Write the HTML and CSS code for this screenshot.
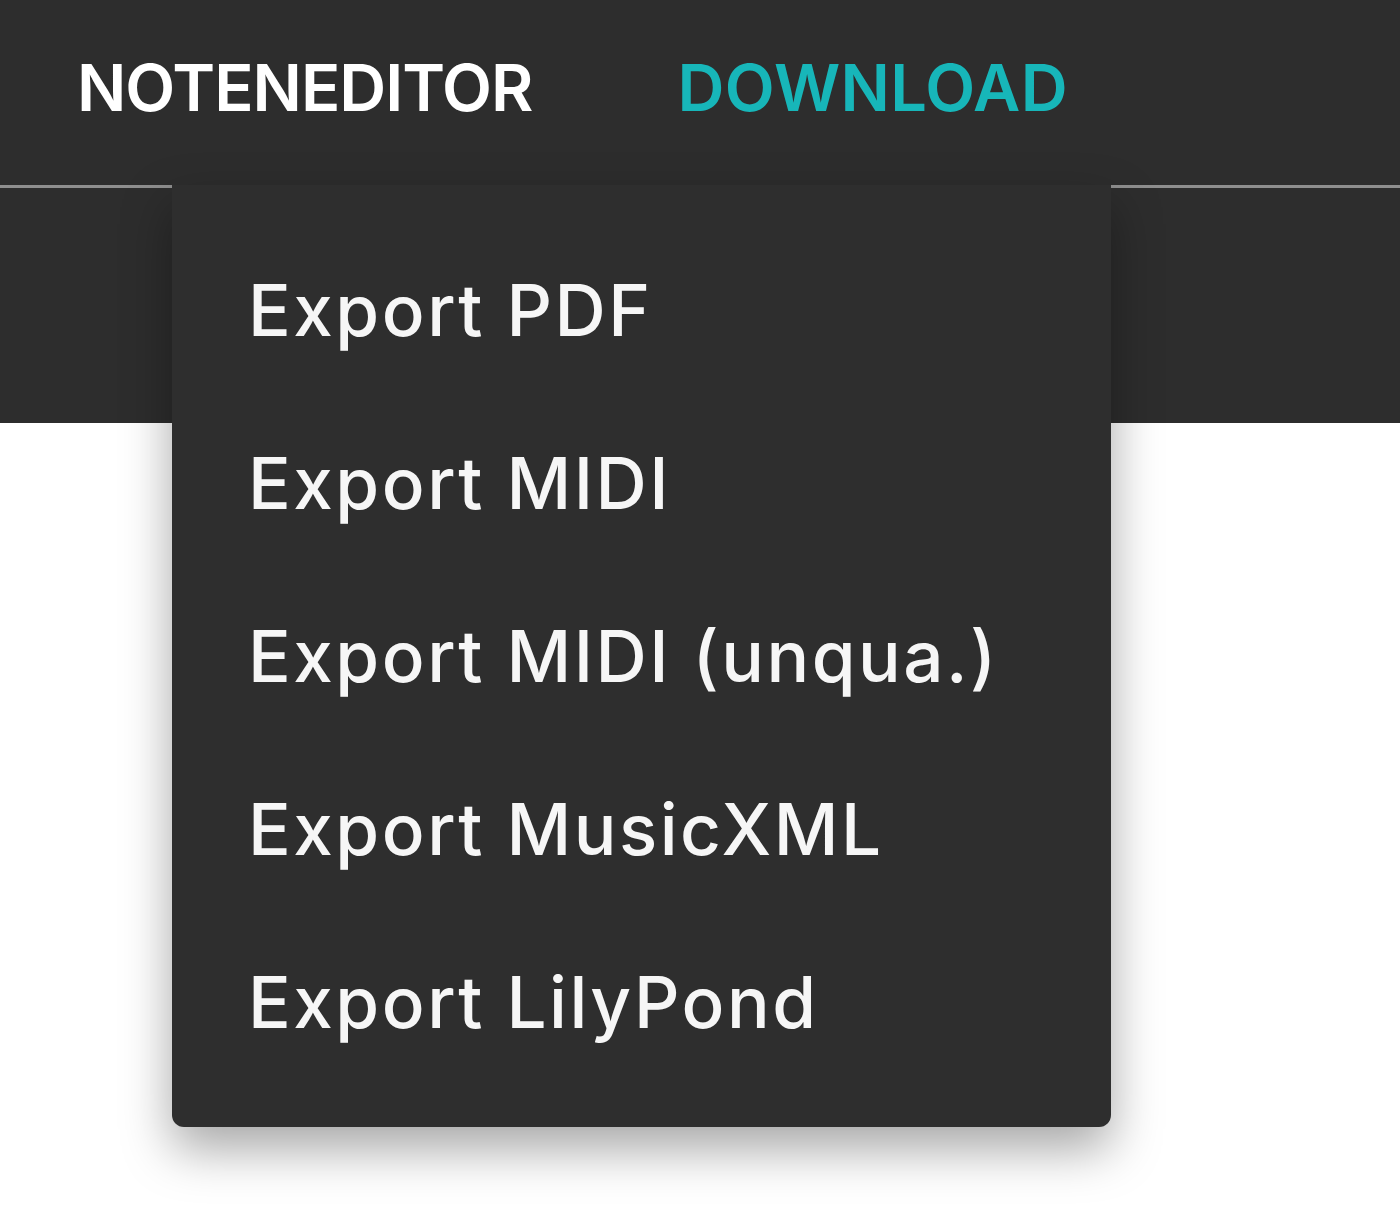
FILE: index.html
```html
<!DOCTYPE html>
<html lang="de">
<head>
  <meta charset="UTF-8">
  <meta name="viewport" content="width=device-width, initial-scale=1.0">
  <title>Noteneditor</title>
  <link rel="stylesheet" href="styles.css">
</head>
<body>
  <header class="topbar">
    <nav class="nav">
      <a class="nav-link" href="#">NOTENEDITOR</a>
      <div class="nav-item">
        <a class="nav-link active" href="#">DOWNLOAD</a>
        <ul class="dropdown">
          <li class="dropdown-item">Export PDF</li>
          <li class="dropdown-item">Export MIDI</li>
          <li class="dropdown-item">Export MIDI (unqua.)</li>
          <li class="dropdown-item">Export MusicXML</li>
          <li class="dropdown-item">Export LilyPond</li>
        </ul>
      </div>
    </nav>
  </header>
  <div class="toolbar"></div>
  <main class="content"></main>
</body>
</html>
```

FILE: styles.css
```css
html, body {
  height: 100%;
}
body {
  margin: 0;
  display: flex;
  flex-direction: column;
  font-family: Inter, "Noto Sans", sans-serif;
  background-color: #fff;
}
.topbar {
  flex: none;
  height: 185px;
  background-color: #2d2d2d;
  border-bottom: 3px solid #8e8e8e;
}
.nav {
  position: relative;
  display: flex;
  align-items: center;
  height: 100%;
  padding-left: 77px;
  gap: 145px;
}
.nav-link {
  display: block;
  padding-bottom: 11px;
  color: #fff;
  text-decoration: none;
  font-size: 65px;
  font-weight: 600;
  letter-spacing: -1px;
}
.nav-link.active {
  color: #17b6b9;
  letter-spacing: 0.3px;
}
.dropdown {
  position: absolute;
  top: 100%;
  left: 172px;
  width: 939px;
  margin: 0;
  padding: 38px 0 39px;
  list-style: none;
  background-color: #2e2e2e;
  border-radius: 0 0 12px 12px;
  box-shadow: 0 22px 50px rgba(0, 0, 0, 0.35);
  z-index: 2;
}
.dropdown-item {
  height: 173px;
  display: flex;
  align-items: center;
  padding-left: 76px;
  color: #f6f6f6;
  font-size: 71px;
  font-weight: 500;
  letter-spacing: 2.5px;
}
.toolbar {
  flex: none;
  height: 235px;
  background-color: #2d2d2d;
}
.content {
  flex: 1;
}
```
